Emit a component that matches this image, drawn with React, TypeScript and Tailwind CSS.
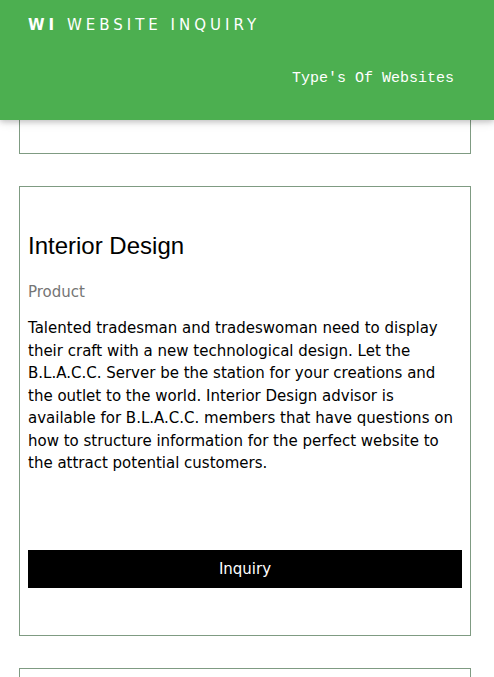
import React from "react";

type Kind = { title: string; text: string };

const kinds: Kind[] = [
  {
    title: "Interior Design",
    text: "Talented tradesman and tradeswoman need to display their craft with a new technological design. Let the B.L.A.C.C. Server be the station for your creations and the outlet to the world. Interior Design advisor is available for B.L.A.C.C. members that have questions on how to structure information for the perfect website to the attract potential customers.",
  },
];

function Card({ title, text }: Kind) {
  return (
    <li className="border border-[#7f9b82] px-2 pt-11 pb-[47px]">
      <h2 className="font-['Liberation_Sans',Arial,sans-serif] text-[24px] leading-[30px]">{title}</h2>
      <p className="mt-5 leading-[22px] text-[#757575]">Product</p>
      <p className="mt-3.5 leading-normal">{text}</p>
      <button type="button" className="mt-[75px] block w-full bg-black px-4 py-2 leading-[22px] text-white">
        Inquiry
      </button>
    </li>
  );
}

export default function App() {
  return (
    <div className="h-screen overflow-hidden bg-white font-['DejaVu_Sans',Verdana,sans-serif] text-[15px] text-black">
      <header className="relative h-[120px] bg-[#4caf50] px-5 text-white shadow-[0_2px_5px_0_rgba(0,0,0,0.16),0_2px_10px_0_rgba(0,0,0,0.12)]">
        <a href="#home" className="block px-2 pt-[13px] leading-6 tracking-[4px]">
          <b>WI</b> WEBSITE INQUIRY
        </a>
        <nav className="flex justify-end px-5 pt-[30px]">
          <a href="#types" className="font-['Liberation_Mono','Courier_New',monospace] leading-6">
            Type's Of Websites
          </a>
        </nav>
      </header>
      <ul className="mr-[23px] ml-[19px] flex flex-col gap-8">
        <li className="h-[34px] border border-t-0 border-[#7f9b82]" />
        {kinds.map((kind) => (
          <Card key={kind.title} {...kind} />
        ))}
        <li className="h-24 border border-[#7f9b82]" />
      </ul>
    </div>
  );
}
